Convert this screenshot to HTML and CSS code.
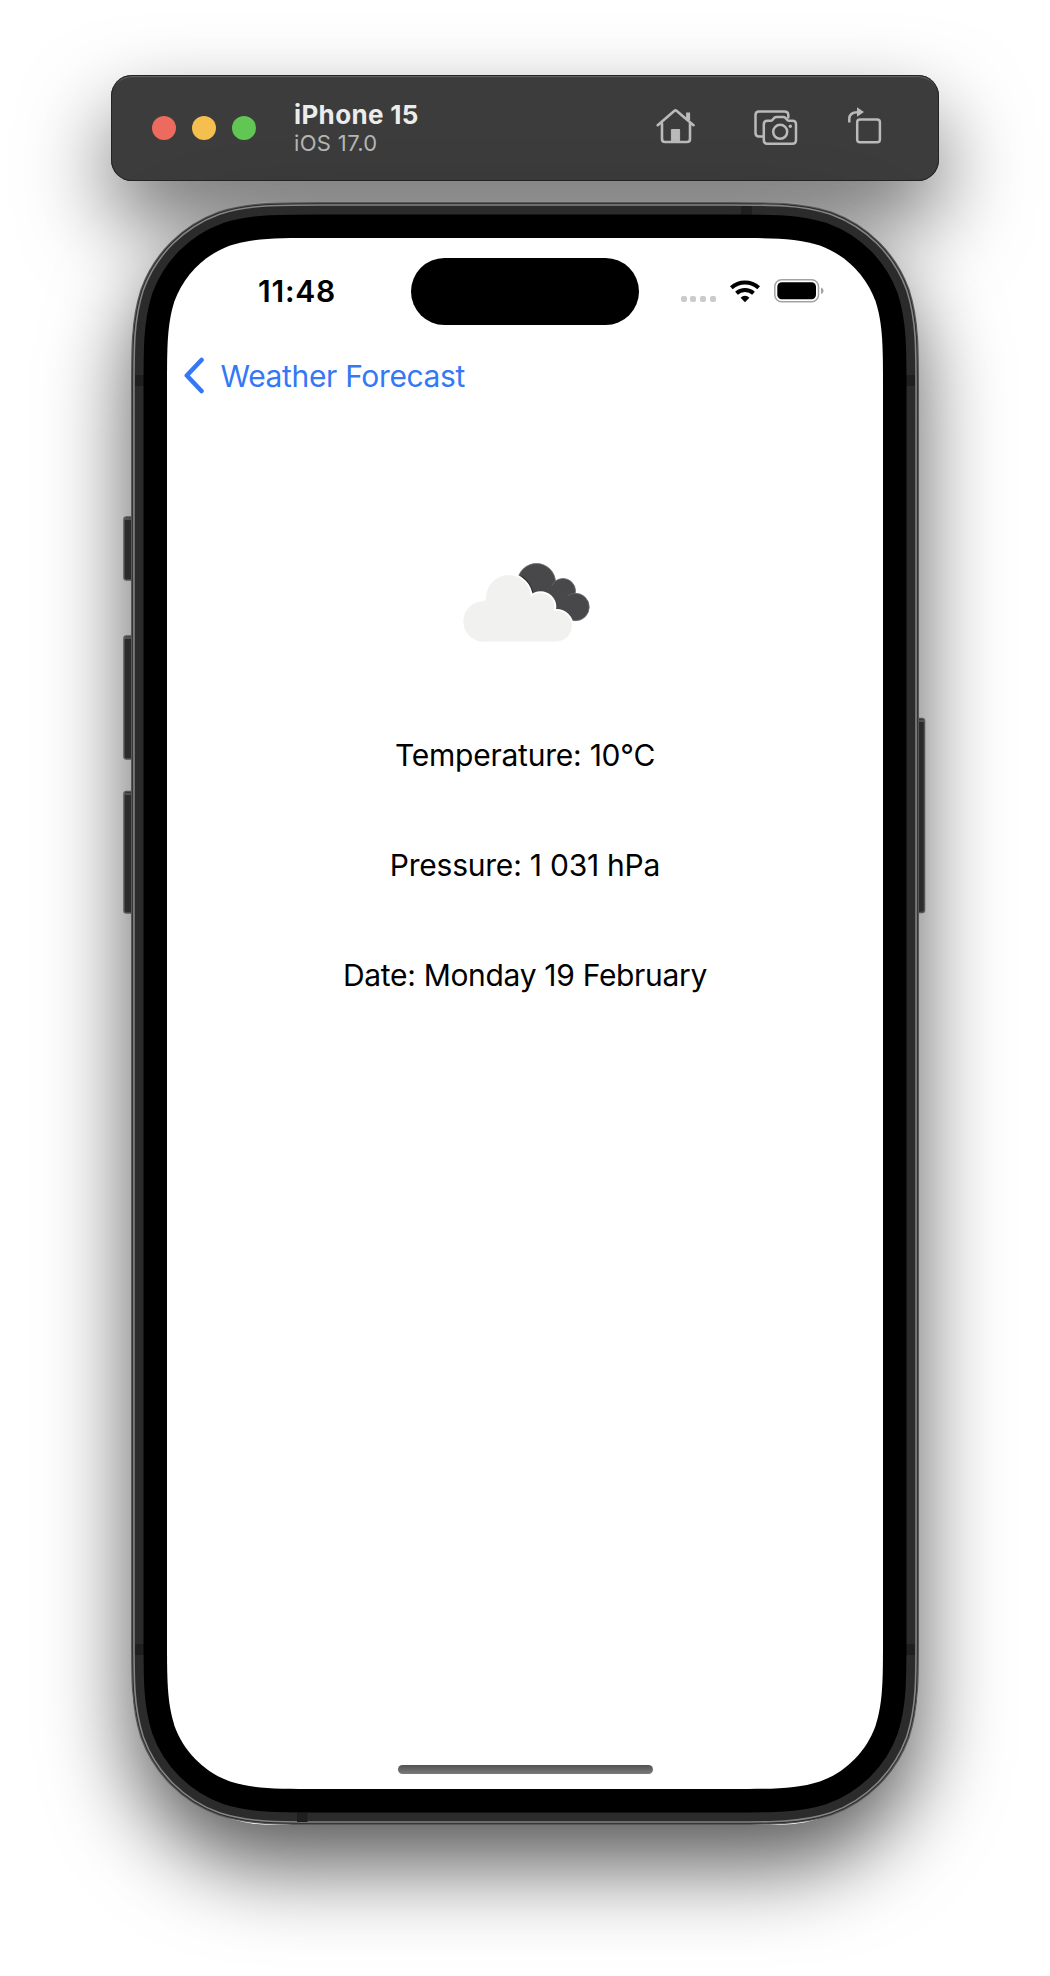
FILE: index.html
```html
<!DOCTYPE html>
<html lang="en">
<head>
<meta charset="utf-8">
<title>Weather Forecast</title>
<link rel="stylesheet" href="styles.css">
</head>
<body>
<div class="simulator">
  <header class="toolbar">
    <div class="lights"><span class="light red"></span><span class="light amber"></span><span class="light green"></span></div>
    <div class="device-name">
      <div class="device-title">iPhone 15</div>
      <div class="device-os">iOS 17.0</div>
    </div>
    <div class="actions">
      <svg class="icon-home" width="40" height="36" viewBox="0 0 40 36" fill="none" stroke="#b9bab9" stroke-width="2.6" stroke-linecap="round" stroke-linejoin="round">
        <path d="M1.7 17.2 18.2 3Q19.5 1.9 20.8 3L37.5 17.2M6 15.500V31Q6 34 9 34H31Q34 34 34 31V15.500"/>
        <path d="M32.100 4.500V12" stroke-width="4" stroke-linecap="butt"/>
        <path d="M15.400 34V21.500H23.600V34Z" fill="#b9bab9" stroke-width="1"/>
      </svg>
      <svg class="icon-camera" width="44" height="36" viewBox="0 0 44 36" fill="none" stroke="#b9bab9" stroke-width="2.500" stroke-linejoin="round" stroke-linecap="round">
        <path d="M8.500 26.500H5Q1.500 26.500 1.500 23V5Q1.500 1.500 5 1.500H30.500Q34 1.500 34.300 4.500V7.500"/>
        <path d="M13.500 10.800H16.500Q17.800 10.800 18.700 9.700L20.300 7.900Q21.200 7 22.600 7H29.200Q30.500 7 31.400 7.900L33 9.700Q33.900 10.800 35.200 10.800H38.500Q42 10.800 42 14.300V30.200Q42 33.700 38.500 33.700H13.300Q9.800 33.700 9.800 30.200V14.300Q9.800 10.800 13.500 10.800Z"/>
        <circle cx="26.200" cy="21.800" r="7"/><circle cx="36.300" cy="16.200" r="1.700" fill="#b9bab9" stroke="none"/>
      </svg>
      <svg class="icon-rotate" width="34" height="37" viewBox="0 0 34 37" fill="none" stroke="#b9bab9" stroke-width="2.500">
        <rect x="9.200" y="12.500" width="22.700" height="22.700" rx="2.800"/>
        <path d="M1.300 15.500V12Q1.300 5.200 9.500 5.200"/><path d="M9 .3 16 5 9 9.700Z" fill="#b9bab9" stroke="none"/>
      </svg>
    </div>
  </header>

  <main class="phone">
    <svg class="phone-frame" viewBox="132 202 786 1623" width="786" height="1623">
      <defs>
        <path id="glass" d="M319.900 238H730.100C774.200 238 796.200 238 819.900 245.500C845.700 254.900 866.100 275.300 875.500 301.100C883 324.800 883 346.800 883 390.900V1636.100C883 1680.200 883 1702.200 875.500 1725.900C866.100 1751.700 845.700 1772.100 819.900 1781.500C796.200 1789 774.200 1789 730.100 1789H319.900C275.800 1789 253.800 1789 230.100 1781.500C204.300 1772.100 183.900 1751.700 174.500 1725.900C167 1702.200 167 1680.200 167 1636.100V390.900C167 346.800 167 324.800 174.500 301.100C183.900 275.300 204.300 254.900 230.100 245.500C253.800 238 275.800 238 319.900 238Z"/>
      </defs>
      <g fill="#2b2b2b" stroke="#555" stroke-width="1.500">
        <rect x="124" y="517" width="14" height="63" rx="2.500"/>
        <rect x="124" y="636" width="14" height="123" rx="2.500"/>
        <rect x="124" y="791.500" width="14" height="121.500" rx="2.500"/>
        <rect x="911" y="718.500" width="13.500" height="194" rx="2.500"/>
      </g>
      <path d="M124.500 519H132M124.500 638H132M124.500 794H132M918 721H924" stroke="#777" stroke-width="1"/>
      <g fill="none">
        <use href="#glass" stroke="#585858" stroke-width="72"/>
        <use href="#glass" stroke="#2b2b2b" stroke-width="69.500"/>
        <use href="#glass" stroke="#858585" stroke-width="67.700"/>
        <use href="#glass" stroke="#2b2b2b" stroke-width="64.500"/>
        <path d="M741 210.500H752M297 1817.500H307.500" stroke="#1f1f1f" stroke-width="9"/>
        <path d="M139.500 375V386M910.500 375V386M139.500 1644V1655M910.500 1644V1655" stroke="#1f1f1f" stroke-width="9"/>
        <use href="#glass" stroke="#000" stroke-width="47"/>
      </g>
      <use href="#glass" fill="#fff"/>
    </svg>

    <section class="screen">
      <div class="status-bar">
        <div class="clock">11:48</div>
        <div class="island"></div>
        <div class="indicators">
          <div class="cell-dots"><i></i><i></i><i></i><i></i></div>
          <svg class="wifi" width="30" height="23" viewBox="0 0 30 23" fill="none" stroke="#000" stroke-width="4">
            <path d="M1.300 7.700Q7 2.500 15 2.500T28.700 7.700"/>
            <path d="M6.500 13.200Q10 10 15 10T23.500 13.200"/>
            <path d="M15 22.300 10.600 17.800Q12.400 15.800 15 15.800T19.400 17.800Z" fill="#000" stroke="none"/>
          </svg>
          <svg class="battery" width="50" height="24" viewBox="0 0 50 24">
            <rect x=".8" y=".8" width="43.700" height="22" rx="6.800" fill="none" stroke="#a3a3a3" stroke-width="1.500"/>
            <rect x="3.300" y="3.300" width="38.700" height="17" rx="4.500"/>
            <path d="M47 8.500Q49.600 9.400 49.600 11.800T47 15.100Z" fill="#a3a3a3"/>
          </svg>
        </div>
      </div>
      <nav class="nav-bar">
        <svg width="22" height="37" viewBox="0 0 22 37" fill="none" stroke="#3478f6" stroke-width="4.600" stroke-linecap="round" stroke-linejoin="round"><path d="M18.500 3 3.800 18.500 18.500 34"/></svg>
        <span class="back-label">Weather Forecast</span>
      </nav>
      <div class="forecast">
        <svg class="cloud" width="128" height="80" viewBox="0 0 128 80">
          <g fill="#48484a" stroke="#6a6a6a" stroke-width=".8"><circle cx="73.500" cy="19.500" r="19"/><circle cx="100" cy="28" r="12.500"/><circle cx="112.500" cy="44" r="13.700"/><path d="M80 20 100 26 112 45 105 55 80 42Z" stroke="none"/></g>
          <g fill="#2c2c2e"><circle cx="45.500" cy="34.500" r="25.300" clip-path="inset(0 0 0 38px)"/></g>
          <g fill="#f1f1ef" stroke="#fff" stroke-width="2"><circle cx="45.500" cy="34.500" r="23.200"/><circle cx="77.500" cy="44" r="14.800"/><circle cx="93.500" cy="63" r="16"/></g>
          <g fill="#f1f1ef"><circle cx="20.500" cy="58.500" r="20.200"/><circle cx="45.500" cy="34.500" r="22.300"/><circle cx="77.500" cy="44" r="13.800"/><circle cx="93.500" cy="63" r="15.300"/><path d="M20.500 38 45 25 77 42 94 50V78.500H20.500Z"/></g>
        </svg>
        <p class="reading temperature">Temperature: 10°C</p>
        <p class="reading pressure">Pressure: 1 031 hPa</p>
        <p class="reading date">Date: Monday 19 February</p>
      </div>
      <div class="home-indicator"></div>
    </section>
  </main>
</div>
</body>
</html>
```
FILE: styles.css
```css
* { box-sizing: border-box; }
body {
  margin: 0;
  background: #fff;
  font-family: Inter, "Liberation Sans", sans-serif;
  overflow: hidden;
}
.simulator {
  height: 1976px;
  padding-top: 75px;
  display: flex;
  flex-direction: column;
  align-items: center;
  gap: 21px;
}
.toolbar {
  position: relative;
  z-index: 0;
  width: 828px;
  height: 106px;
  flex: none;
  display: flex;
  align-items: center;
  padding: 0 57px 0 41px;
  border-radius: 21px;
  background: #3b3c3b;
  box-shadow: inset 0 0 0 1px #222423, inset 0 3px 1px -1px #666, 0 40px 86px rgba(0, 0, 0, .57);
}
.lights { display: flex; gap: 16px; }
.light { width: 24px; height: 24px; border-radius: 50%; }
.red { background: #ed6a5f; }
.amber { background: #f5bf4f; }
.green { background: #62c655; }
.device-name { margin-left: 38px; padding-top: 2px; white-space: nowrap; }
.device-title { font-size: 26px; line-height: 29px; font-weight: 700; color: #ececec; letter-spacing: .35px; }
.device-os { font-size: 22px; line-height: 29px; color: #b4b5b4; letter-spacing: .35px; }
.actions { display: flex; align-items: center; margin-left: auto; }
.icon-home { margin-top: -4px; }
.icon-camera { margin-left: 58px; margin-top: -1px; }
.icon-rotate { margin-left: 50px; margin-top: -5px; }

.phone {
  position: relative;
  width: 786px;
  height: 1623px;
  flex: none;
  padding: 36px 35px;
  border-radius: 140px;
  box-shadow: 0 40px 86px rgba(0, 0, 0, .66);
}
.phone-frame { position: absolute; inset: 0; overflow: visible; }
.screen {
  position: relative;
  height: 1551px;
  display: flex;
  flex-direction: column;
  padding-top: 20px;
}
.status-bar {
  display: grid;
  grid-template-columns: 1fr 228px 1fr;
  height: 67px;
  align-items: center;
}
.clock { padding: 0 0 2px 91px; font-size: 30px; line-height: 36px; font-weight: 600; letter-spacing: .8px; }
.island { height: 67px; border-radius: 34px; background: #000; }
.indicators { display: flex; padding-left: 41.500px; align-items: center; }
.cell-dots { display: flex; gap: 3.700px; padding-top: 15px; }
.cell-dots i { width: 6px; height: 6px; border-radius: 2px; background: #cbcbcb; }
.wifi { margin-left: 14px; }
.battery { margin-left: 14px; margin-top: -1px; }
.nav-bar {
  display: flex;
  align-items: center;
  height: 101px;
  padding-left: 15.500px;
  gap: 16px;
  color: #3478f6;
}
.back-label { font-size: 30px; line-height: 36px; letter-spacing: -.35px; white-space: nowrap; }
.forecast {
  flex: 1;
  display: flex;
  flex-direction: column;
  align-items: center;
}
.cloud { margin: 137px 0 93px 4px; }
.reading { margin: 0 0 72px; font-size: 30px; line-height: 38px; letter-spacing: -.23px; white-space: nowrap; }
.date { letter-spacing: -.31px; }
.home-indicator {
  align-self: center;
  width: 255px;
  height: 9px;
  margin-bottom: 15px;
  border-radius: 5px;
  background: linear-gradient(#525252, #7a7a7a);
}
```
